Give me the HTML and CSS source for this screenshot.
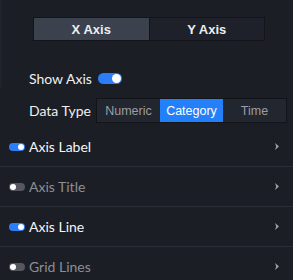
FILE: index.html
```html
<!DOCTYPE html>
<html lang="en">
<head>
    <meta charset="UTF-8">
    <title>Axis Settings</title>
    <link rel="stylesheet" href="styles.css">
</head>
<body>
    <div class="panel">
        <div class="edge"></div>
        <!-- Axis tabs -->
        <div class="tabs">
            <div class="tab active">X Axis</div>
            <div class="tab">Y Axis</div>
        </div>

        <div class="field show-field">
            <span class="field-label">Show Axis</span>
            <span class="toggle on"></span>
        </div>

        <div class="field type-field">
            <span class="field-label">Data Type</span>
            <div class="segmented">
                <div class="seg">Numeric</div>
                <div class="seg selected">Category</div>
                <div class="seg">Time</div>
            </div>
        </div>

        <!-- Collapsible sections -->
        <div class="section">
            <span class="mini-toggle on"></span>
            <span class="section-name">Axis Label</span>
            <span class="chevron"></span>
        </div>
        <div class="section off">
            <span class="mini-toggle"></span>
            <span class="section-name">Axis Title</span>
            <span class="chevron"></span>
        </div>
        <div class="section">
            <span class="mini-toggle on"></span>
            <span class="section-name">Axis Line</span>
            <span class="chevron"></span>
        </div>
        <div class="section off">
            <span class="mini-toggle"></span>
            <span class="section-name">Grid Lines</span>
            <span class="chevron"></span>
        </div>
    </div>
</body>
</html>
```
FILE: styles.css
```css
:root {
    --bg: #1b1e25;
    --blue: #2b7ef6;
    --text: #f4f5f7;
    --muted: #8b8e94;
    --line: #2b2e36;
}

* {
    margin: 0;
    padding: 0;
    box-sizing: border-box;
}

body {
    background: var(--bg);
    font-family: Lato, 'Liberation Sans', sans-serif;
    color: var(--text);
    width: 293px;
    height: 280px;
    overflow: hidden;
}

.panel {
    position: relative;
    padding-top: 17px;
}

.edge {
    position: absolute;
    left: 0;
    top: 0;
    width: 2px;
    height: 88px;
    background: #20232b;
}

.tabs {
    display: flex;
    margin: 0 28px 0 33px;
    height: 24px;
    border: 1px solid #121419;
    font-family: 'Liberation Sans', sans-serif;
    font-size: 13px;
    font-weight: bold;
}

.tab {
    flex: 1;
    display: flex;
    align-items: center;
    justify-content: center;
    background: #1e2129;
    color: #eceef1;
}

.tab.active {
    background: #3b414d;
    border-right: 1px solid #121419;
}

.field {
    display: flex;
    align-items: center;
    padding-left: 29px;
    font-size: 14px;
}

.show-field {
    margin-top: 27px;
    height: 20px;
}

.type-field {
    margin-top: 10px;
    height: 25px;
}

.field-label {
    width: 67px;
    color: #eef0f2;
}

.show-field .field-label {
    width: 69px;
}

.toggle {
    position: relative;
    width: 24px;
    height: 11px;
    border-radius: 6px;
    background: var(--blue);
}

.toggle::after {
    content: '';
    position: absolute;
    right: 1px;
    top: 1px;
    width: 9px;
    height: 9px;
    border-radius: 50%;
    background: #fff;
}

.segmented {
    display: flex;
    width: 191px;
    height: 25px;
    border: 1px solid #121419;
    background: #22262e;
    font-family: 'Liberation Sans', sans-serif;
    font-size: 12.5px;
}

.seg {
    flex: 1;
    display: flex;
    align-items: center;
    justify-content: center;
    color: #9a9ea6;
}

.seg.selected {
    background: #2480f8;
    color: #fff;
}

.section {
    display: flex;
    align-items: center;
    height: 40px;
    padding: 0 14px 0 9px;
    border-bottom: 1px solid var(--line);
    font-size: 14px;
}

.type-field + .section {
    margin-top: 4px;
}

.mini-toggle {
    position: relative;
    width: 16px;
    height: 8px;
    border-radius: 4px;
    background: #54575e;
    margin-right: 4px;
}

.mini-toggle::after {
    content: '';
    position: absolute;
    left: 1px;
    top: 1px;
    width: 6px;
    height: 6px;
    border-radius: 50%;
    background: #fff;
}

.mini-toggle.on {
    background: var(--blue);
}

.mini-toggle.on::after {
    left: auto;
    right: 1px;
}

.section-name {
    flex: 1;
}

.section.off .section-name {
    color: var(--muted);
}

.chevron {
    width: 4px;
    height: 7px;
    background: #9ea3ab;
    clip-path: polygon(0 0, 100% 50%, 0 100%, 30% 50%);
}
```
